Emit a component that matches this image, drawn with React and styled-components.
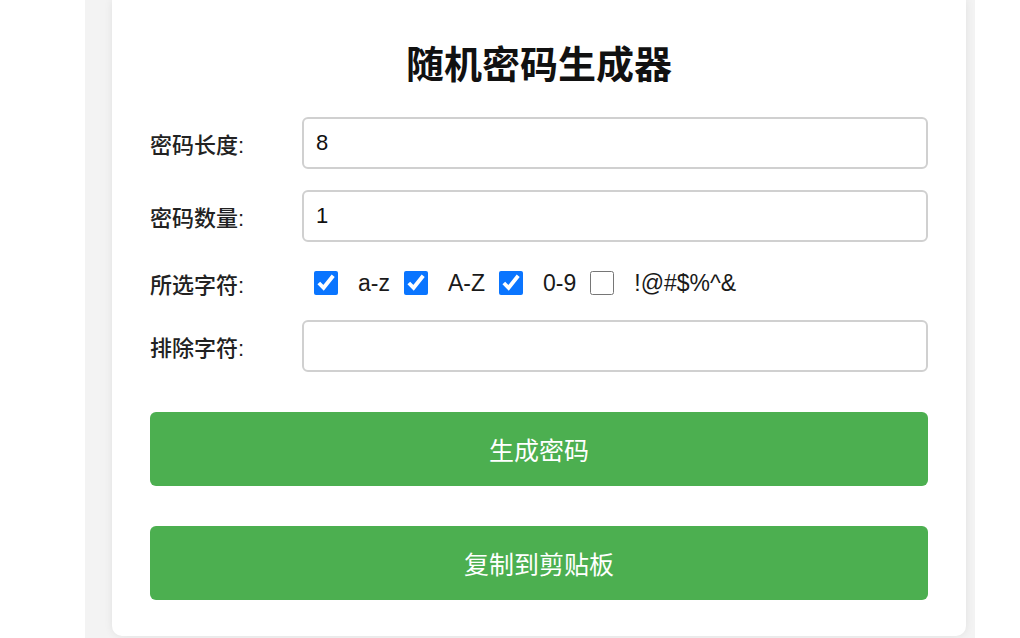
import React, { useState } from 'react';
import styled, { createGlobalStyle } from 'styled-components';

const GlobalStyle = createGlobalStyle`
  html, body {
    margin: 0;
    padding: 0;
    background: #ffffff;
    overflow: hidden;
  }
  body {
    font-family: "Liberation Sans", "Noto Sans CJK SC", sans-serif;
  }
`;

const Page = styled.div`
  width: 1020px;
  height: 638px;
  display: flex;
`;

const Backdrop = styled.div`
  margin-left: 85px;
  width: 890px;
  height: 100%;
  background: #f3f3f3;
  display: flex;
  padding-left: 27px;
  box-sizing: border-box;
`;

const Card = styled.div`
  width: 854px;
  height: 636px;
  background: #ffffff;
  border-radius: 0 0 10px 10px;
  box-shadow: 0 0 8px rgba(0, 0, 0, 0.08);
  padding: 39px 38px 36px;
  box-sizing: border-box;
  display: flex;
  flex-direction: column;
`;

const Title = styled.h1`
  margin: 0 0 32px;
  font-size: 38px;
  line-height: 46px;
  font-weight: 700;
  color: #111;
  text-align: center;
  font-family: "Noto Sans CJK SC", sans-serif;
`;

const Form = styled.div`
  display: flex;
  flex-direction: column;
  gap: 21px;
`;

const Row = styled.div`
  display: flex;
  align-items: center;
  box-sizing: border-box;
  height: ${p => p.$h || 52}px;
  padding-top: ${p => p.$pt || 0}px;
`;

const Label = styled.span`
  width: 152px;
  flex: none;
  font-size: 22px;
  font-weight: 500;
  color: #222;
`;

const Input = styled.input`
  flex: 1;
  height: 52px;
  box-sizing: border-box;
  border: 2px solid #d0d0d0;
  border-radius: 6px;
  padding: 0 12px;
  font-size: 22px;
  font-family: "Liberation Sans", sans-serif;
  color: #111;
  outline: none;
`;

const Options = styled.div`
  display: flex;
  align-items: center;
  padding-left: 12px;
`;

const Check = styled.input`
  width: 24px;
  height: 24px;
  margin: 0 0 0 ${p => (p.$first ? 0 : 14)}px;
  accent-color: #0a75ff;
`;

const OptionText = styled.span`
  margin-left: 20px;
  font-size: 23px;
  color: #1a1a1a;
`;

const Button = styled.button`
  height: 74px;
  border: none;
  border-radius: 6px;
  background: #4caf50;
  color: #ffffff;
  font-size: 25px;
  font-family: "Noto Sans CJK SC", sans-serif;
  cursor: pointer;
  margin-top: ${p => p.$top}px;
`;

const options = [
  { key: 'lower', text: 'a-z', on: true },
  { key: 'upper', text: 'A-Z', on: true },
  { key: 'digit', text: '0-9', on: true },
  { key: 'symbol', text: '!@#$%^&', on: false },
];

export default function App() {
  const [length, setLength] = useState('8');
  const [count, setCount] = useState('1');
  const [exclude, setExclude] = useState('');
  const [checks, setChecks] = useState(
    Object.fromEntries(options.map(o => [o.key, o.on]))
  );

  return (
    <Page>
      <GlobalStyle />
      <Backdrop>
        <Card>
          <Title>随机密码生成器</Title>
          <Form>
            <Row>
              <Label>密码长度:</Label>
              <Input value={length} onChange={e => setLength(e.target.value)} />
            </Row>
            <Row>
              <Label>密码数量:</Label>
              <Input value={count} onChange={e => setCount(e.target.value)} />
            </Row>
            <Row $h={36} $pt={4}>
              <Label>所选字符:</Label>
              <Options>
                {options.map((o, i) => (
                  <React.Fragment key={o.key}>
                    <Check
                      type="checkbox"
                      $first={i === 0}
                      checked={checks[o.key]}
                      onChange={() => setChecks({ ...checks, [o.key]: !checks[o.key] })}
                    />
                    <OptionText>{o.text}</OptionText>
                  </React.Fragment>
                ))}
              </Options>
            </Row>
            <Row>
              <Label>排除字符:</Label>
              <Input value={exclude} onChange={e => setExclude(e.target.value)} />
            </Row>
          </Form>
          <Button $top={40}>生成密码</Button>
          <Button $top={40}>复制到剪贴板</Button>
        </Card>
      </Backdrop>
    </Page>
  );
}
